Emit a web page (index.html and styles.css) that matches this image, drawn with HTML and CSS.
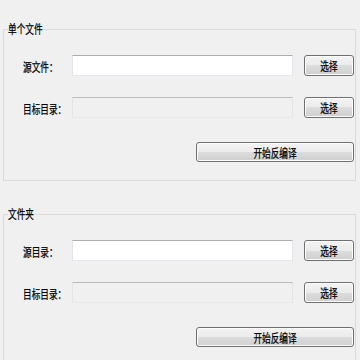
FILE: index.html
```html
<!DOCTYPE html>
<html lang="zh-CN">
<head>
<meta charset="utf-8">
<title>反编译</title>
<link rel="stylesheet" href="styles.css">
</head>
<body>
<div class="window">
  <fieldset class="group">
    <legend class="group-title"><span class="sx">单个文件</span></legend>
    <div class="group-body">
      <div class="form-grid">
        <label class="lbl"><span class="sx">源文件：</span></label>
        <input class="field" type="text">
        <button class="btn btn-small"><span class="sx sx-c">选择</span></button>
        <label class="lbl"><span class="sx">目标目录：</span></label>
        <input class="field" type="text" disabled>
        <button class="btn btn-small"><span class="sx sx-c">选择</span></button>
      </div>
      <div class="actions">
        <button class="btn btn-wide"><span class="sx sx-c">开始反编译</span></button>
      </div>
    </div>
  </fieldset>
  <fieldset class="group">
    <legend class="group-title group-title-short"><span class="sx">文件夹</span></legend>
    <div class="group-body">
      <div class="form-grid">
        <label class="lbl"><span class="sx">源目录：</span></label>
        <input class="field" type="text">
        <button class="btn btn-small"><span class="sx sx-c">选择</span></button>
        <label class="lbl"><span class="sx">目标目录：</span></label>
        <input class="field" type="text" disabled>
        <button class="btn btn-small"><span class="sx sx-c">选择</span></button>
      </div>
      <div class="actions">
        <button class="btn btn-wide"><span class="sx sx-c">开始反编译</span></button>
      </div>
    </div>
  </fieldset>
</div>
</body>
</html>
```

FILE: styles.css
```css
html, body {
  margin: 0;
  background: #f0f0f0;
}
body {
  font-family: "Noto Sans CJK SC", "Noto Sans", sans-serif;
  font-size: 12px;
  color: #000;
  overflow: hidden;
}
.window {
  padding-top: 22px;
}
.group {
  margin: 0 4px 0 3px;
  padding: 0;
  border: 1px solid #dadada;
  min-width: 0;
}
.group + .group {
  margin-top: 26px;
}
.group-title {
  margin-left: 4px;
  padding: 0;
  width: 35px;
  height: 14px;
  line-height: 14px;
  white-space: nowrap;
}
.group-title-short {
  width: 27px;
}
.group-body {
  padding: 19px 1px 18px 19px;
}
.form-grid {
  display: grid;
  grid-template-columns: 49px 221px 1fr;
  grid-auto-rows: 21px;
  row-gap: 21px;
}
.lbl {
  align-self: center;
  line-height: 14px;
  white-space: nowrap;
  padding-top: 2px;
}
.sx {
  display: inline-block;
  transform: scaleX(0.72);
  transform-origin: left center;
  white-space: nowrap;
  -webkit-text-stroke: 0.25px #000;
}
.sx-c {
  transform-origin: center center;
}
.field {
  box-sizing: border-box;
  width: 221px;
  height: 21px;
  margin: 0;
  padding: 0 3px;
  border: 1px solid;
  border-color: #abadb3 #e2e3ea #e3e9ef #e2e3ea;
  background: #fff;
  font: inherit;
  outline: none;
}
.field:disabled {
  background: #f0f0f0;
  border-color: #bcbcbc #e4e4e4 #e8e8e8 #e4e4e4;
}
.btn {
  box-sizing: border-box;
  margin: 0;
  padding: 0;
  font: inherit;
  color: #000;
  line-height: 17px;
  border: 1px solid #707070;
  border-radius: 3px;
  background: linear-gradient(#f3f3f3 0%, #ebebeb 50%, #dddddd 50%, #cfcfcf 100%);
  box-shadow: inset 0 0 0 1px #fcfcfc;
  text-align: center;
  overflow: visible;
}
.btn-small {
  justify-self: end;
  width: 50px;
  height: 21px;
}
.actions {
  display: flex;
  justify-content: flex-end;
  margin-top: 24px;
}
.btn-wide {
  width: 158px;
  height: 20px;
}
```
